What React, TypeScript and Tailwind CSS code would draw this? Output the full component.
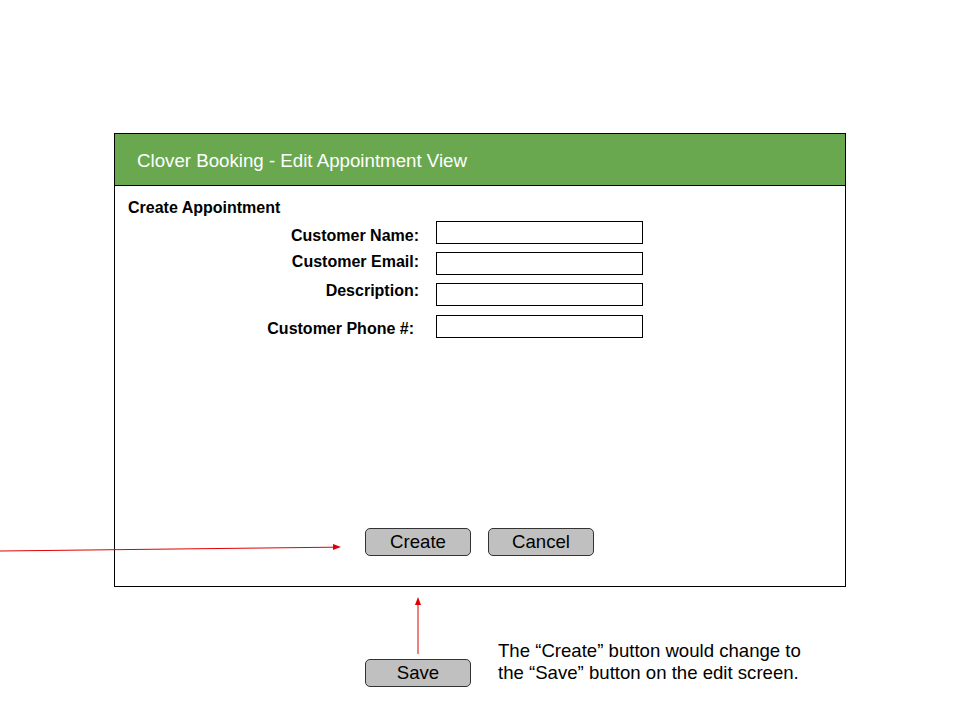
export default function App() {
  const fields = [
    { label: "Customer Name:", labelTop: "mt-[6px]", rowTop: "mt-[4px]", pr: "pr-[17px]" },
    { label: "Customer Email:", labelTop: "mt-[1px]", rowTop: "mt-[8px]", pr: "pr-[17px]" },
    { label: "Description:", labelTop: "mt-[-1px]", rowTop: "mt-[8px]", pr: "pr-[17px]" },
    { label: "Customer Phone #:", labelTop: "mt-[5px]", rowTop: "mt-[9px]", pr: "pr-[22px]" },
  ];

  return (
    <div
      className="relative w-[960px] h-[720px] bg-white overflow-hidden text-black"
      style={{ fontFamily: '"Liberation Sans", Arial, sans-serif' }}
    >
      <div className="pt-[133px] pl-[114px]">
        <div className="w-[732px] h-[454px] border border-black flex flex-col">
          <div className="h-[52px] bg-[#6aa84f] border-b border-black flex items-center pl-[22px] pt-[3px] text-white text-[18.7px]">
            Clover Booking - Edit Appointment View
          </div>

          <div className="flex-1 flex flex-col pt-[13px]">
            <div className="pl-[13px] text-[16px] leading-[18px] font-bold">Create Appointment</div>

            {fields.map((f) => (
              <div key={f.label} className={`flex items-start h-[23px] ${f.rowTop}`}>
                <div className={`w-[321px] text-right text-[16px] leading-[18px] font-bold ${f.pr} ${f.labelTop}`}>
                  {f.label}
                </div>
                <div className="w-[207px] h-[23px] border border-black bg-white" />
              </div>
            ))}

            <div className="mt-auto mb-[30px] flex gap-[17px] pl-[250px]">
              <button className="w-[106px] h-[28px] rounded-[5px] bg-[#c0c0c0] border border-[#333] text-[18.6px] leading-none">
                Create
              </button>
              <button className="w-[106px] h-[28px] rounded-[5px] bg-[#c0c0c0] border border-[#333] text-[18.6px] leading-none">
                Cancel
              </button>
            </div>
          </div>
        </div>
      </div>

      <div className="flex items-start pl-[365px] mt-[53px]">
        <button className="mt-[19px] w-[106px] h-[28px] rounded-[5px] bg-[#c0c0c0] border border-[#333] text-[18.6px] leading-none">
          Save
        </button>
        <div className="ml-[27px] text-[18.6px] leading-[22px]">
          The “Create” button would change to
          <br />
          the “Save” button on the edit screen.
        </div>
      </div>

      <svg className="absolute inset-0 pointer-events-none" width="960" height="720">
        <line x1="0" y1="551" x2="334" y2="547.2" stroke="#e00000" strokeWidth="1" />
        <polygon points="341,547 333,544 333,550" fill="#e00000" />
        <line x1="418" y1="654" x2="418" y2="604" stroke="#e00000" strokeWidth="1" />
        <polygon points="418,597 415,605 421,605" fill="#e00000" />
      </svg>
    </div>
  );
}
